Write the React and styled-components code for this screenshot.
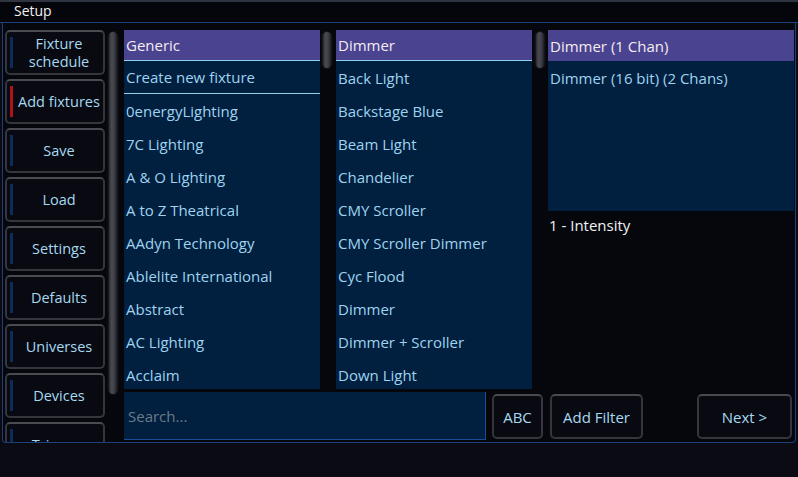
import React from "react";
import styled, { createGlobalStyle } from "styled-components";

const Global = createGlobalStyle`
  html, body { margin: 0; padding: 0; background: #0a0b13; }
  body { font-family: "Open Sans", "Noto Sans", sans-serif; }
`;

const Screen = styled.div`
  width: 798px;
  height: 477px;
  background: #0a0b13;
  overflow: hidden;
  display: flex;
  flex-direction: column;
`;

const TitleBar = styled.div`
  height: 20px;
  border-top: 2px solid #2e3440;
  background: #05060b;
  color: #f2f2f2;
  font-size: 14px;
  line-height: 18px;
  padding-left: 14px;
  border-bottom: 1px solid #1d3f7a;
`;

const Window = styled.div`
  margin: 0 2px 0 2px;
  height: 420px;
  box-sizing: border-box;
  border: 1px solid #1d3f7a;
  border-top: none;
  border-radius: 0 0 4px 4px;
  background: #06070d;
  display: flex;
  padding: 7px 0 0 2px;
  overflow: hidden;
`;

const Sidebar = styled.div`
  width: 100px;
  flex-shrink: 0;
  display: flex;
  flex-direction: column;
  gap: 4px;
  overflow: hidden;
`;

const SideButton = styled.div`
  position: relative;
  flex: 0 0 45px;
  box-sizing: border-box;
  border: 2px solid #34353d;
  border-top-color: #494a52;
  border-radius: 5px;
  background: #090a11;
  color: #a6d9f2;
  font-size: 14.5px;
  line-height: 18px;
  display: flex;
  align-items: center;
  justify-content: center;
  text-align: center;
  padding-left: 8px;
  &::before {
    content: "";
    position: absolute;
    left: 3px;
    top: 5px;
    bottom: 5px;
    width: 3px;
    background: ${(p) => (p.$active ? "#b0101a" : "#0c2c5c")};
  }
`;

const Track = styled.div`
  width: 12px;
  margin: 1px ${(p) => p.$mr}px 0 ${(p) => p.$ml}px;
  height: ${(p) => p.$h}px;
  background: #0b0c12;
  border-radius: 6px;
  position: relative;
  flex-shrink: 0;
`;

const Thumb = styled.div`
  position: absolute;
  left: 1px;
  right: 1px;
  top: 0;
  height: ${(p) => p.$h}px;
  border-radius: 5px;
  background: linear-gradient(90deg, #2a2b33 0%, #4a4b53 35%, #3a3b43 70%, #1e1f26 100%);
  border: 1px solid #15161c;
`;

const Main = styled.div`
  flex: 1;
  display: flex;
  flex-direction: column;
`;

const ListsRow = styled.div`
  display: flex;
  height: 359px;
  align-items: flex-start;
`;

const List = styled.div`
  width: ${(p) => p.$w}px;
  height: ${(p) => p.$h}px;
  background: #01203f;
  overflow: hidden;
  flex-shrink: 0;
`;

const Row = styled.div`
  height: ${(p) => (p.$sel ? 31 : 33)}px;
  box-sizing: border-box;
  padding-left: 2px;
  display: flex;
  align-items: center;
  font-size: 15px;
  color: ${(p) => (p.$sel ? "#f4ecf2" : "#9fd3ef")};
  background: ${(p) => (p.$sel ? "#4a438f" : "transparent")};
  border-bottom: ${(p) => (p.$line ? "1px solid #8fd0ee" : "none")};
  white-space: nowrap;
`;

const DetailColumn = styled.div`
  display: flex;
  flex-direction: column;
`;

const Caption = styled.div`
  color: #f2f2f2;
  font-size: 15px;
  padding: 4px 0 0 1px;
`;

const BottomRow = styled.div`
  display: flex;
  align-items: flex-start;
  margin-top: 3px;
`;

const Search = styled.div`
  width: 362px;
  height: 48px;
  box-sizing: border-box;
  background: #01203f;
  border-right: 1px solid #1a4a9a;
  border-bottom: 1px solid #1a4a9a;
  color: #6b7a88;
  font-size: 15px;
  display: flex;
  align-items: center;
  padding-left: 4px;
  margin-right: 6px;
`;

const Button = styled.div`
  width: ${(p) => p.$w}px;
  height: 45px;
  margin-top: 2px;
  margin-left: ${(p) => p.$ml || 0}px;
  box-sizing: border-box;
  border: 2px solid #34353d;
  border-top-color: #484951;
  border-radius: 5px;
  background: #090a11;
  color: #a6d9f2;
  font-size: 15px;
  display: flex;
  align-items: center;
  justify-content: center;
`;

const sideItems = [
  "Fixture schedule",
  "Add fixtures",
  "Save",
  "Load",
  "Settings",
  "Defaults",
  "Universes",
  "Devices",
  "Triggers",
];

const manufacturers = [
  "0energyLighting",
  "7C Lighting",
  "A & O Lighting",
  "A to Z Theatrical",
  "AAdyn Technology",
  "Ablelite International",
  "Abstract",
  "AC Lighting",
  "Acclaim",
];

const types = [
  "Back Light",
  "Backstage Blue",
  "Beam Light",
  "Chandelier",
  "CMY Scroller",
  "CMY Scroller Dimmer",
  "Cyc Flood",
  "Dimmer",
  "Dimmer + Scroller",
  "Down Light",
];

export default function App() {
  return (
    <Screen>
      <Global />
      <TitleBar>Setup</TitleBar>
      <Window>
        <Sidebar>
          {sideItems.map((s, i) => (
            <SideButton key={s} $active={i === 1}>
              {s === "Fixture schedule" ? (
                <span>
                  Fixture
                  <br />
                  schedule
                </span>
              ) : (
                s
              )}
            </SideButton>
          ))}
        </Sidebar>
        <Track $h={364} $ml={2} $mr={5}>
          <Thumb $h={362} />
        </Track>
        <Main>
          <ListsRow>
            <List $w={196} $h={359}>
              <Row $sel $line>Generic</Row>
              <Row $line>Create new fixture</Row>
              {manufacturers.map((m) => (
                <Row key={m}>{m}</Row>
              ))}
            </List>
            <Track $h={38} $ml={1} $mr={3}>
              <Thumb $h={36} />
            </Track>
            <List $w={196} $h={359}>
              <Row $sel $line>Dimmer</Row>
              {types.map((m) => (
                <Row key={m}>{m}</Row>
              ))}
            </List>
            <Track $h={38} $ml={2} $mr={2}>
              <Thumb $h={36} />
            </Track>
            <DetailColumn>
              <List $w={246} $h={181}>
                <Row $sel>Dimmer (1 Chan)</Row>
                <Row>Dimmer (16 bit) (2 Chans)</Row>
              </List>
              <Caption>1 - Intensity</Caption>
            </DetailColumn>
          </ListsRow>
          <BottomRow>
            <Search>Search...</Search>
            <Button $w={51}>ABC</Button>
            <Button $w={93} $ml={7}>Add Filter</Button>
            <Button $w={95} $ml={54}>Next &gt;</Button>
          </BottomRow>
        </Main>
      </Window>
    </Screen>
  );
}
